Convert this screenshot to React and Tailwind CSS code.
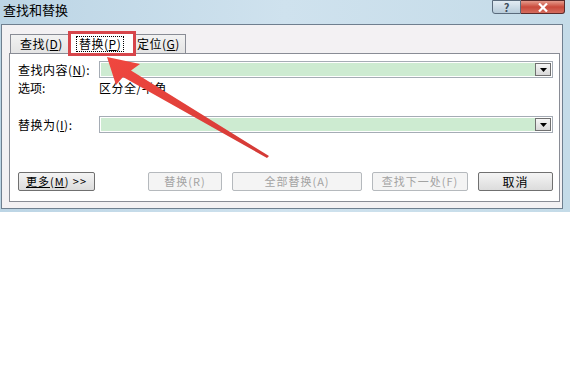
import React from 'react';

const font = { fontFamily: '"Noto Sans CJK SC", "Liberation Sans", sans-serif' };

function Combo() {
  return (
    <div className="flex-1 h-[17px] border border-[#a5acb5] bg-white p-[1px] flex">
      <div className="flex-1 bg-[#cdebd1]" />
      <div className="w-[16px] h-[13px] border border-[#707070] bg-gradient-to-b from-[#f6f6f6] to-[#d8d8d8] flex items-center justify-center">
        <svg width="7" height="4" viewBox="0 0 7 4"><path d="M0 0h7L3.5 4z" fill="#000" /></svg>
      </div>
    </div>
  );
}

function Btn({ children, disabled, className = '' }) {
  return (
    <div
      className={`h-[19px] rounded-[2px] border flex items-center justify-center text-[11px] leading-none tracking-[1px] ${
        disabled
          ? 'border-[#b5b9bd] bg-[#f4f4f4] text-[#a3a3a3]'
          : 'border-[#707070] bg-gradient-to-b from-[#f4f4f4] to-[#dcdcdc] text-black'
      } ${className}`}
    >
      {children}
    </div>
  );
}

export default function App() {
  return (
    <div className="w-[570px] h-[375px] bg-white relative overflow-hidden" style={font}>
      <div className="h-[212px] bg-gradient-to-r from-[#bcd5e5] via-[#cfe2ee] to-[#c4dbe8] flex flex-col">
        <div className="h-[24px] flex justify-between items-start">
          <span className="text-[13px] leading-none pl-[3px] pt-[3px] text-black">查找和替换</span>
          <div className="flex mr-[5px]">
            <div className="w-[29px] h-[14px] border border-[#5a6b7c] rounded-bl-[3px] bg-gradient-to-b from-[#e2ecf3] to-[#b7cbd9] flex items-center justify-center text-[11px] leading-none text-[#3c4c5c] font-bold">?</div>
            <div className="w-[44px] h-[14px] border border-l-0 border-[#5a2a2a] rounded-br-[3px] bg-gradient-to-b from-[#e49a8c] via-[#c9493b] to-[#d46c5e] flex items-center justify-center">
              <svg width="10" height="9" viewBox="0 0 10 9"><path d="M1 0.5l8 8M9 0.5l-8 8" stroke="#fff" strokeWidth="2.2" /></svg>
            </div>
          </div>
        </div>
        <div className="ml-[1px] w-[562px] h-[185px] border border-[#6f7f8f] bg-[#f3f1f3] pl-[7px] pr-[2px] pt-[7px]">
          <div className="flex items-end h-[21px] pl-[1px]">
            <div className="w-[59px] h-[19px] border border-b-0 border-[#898c95] bg-gradient-to-b from-[#f2f2f2] to-[#e4e4e4] text-[12px] leading-none tracking-[0.5px] flex items-center pl-[9px]">查找(<u>D</u>)</div>
            <div className="relative w-[65px] h-[22px] border border-b-0 border-[#898c95] bg-white text-[12px] leading-none tracking-[0.5px] flex items-center pl-[6px] -mb-[1px] z-10">
              <span className="border border-dotted border-black px-[2px] py-[1px]">替换(<u>P</u>)</span>
              <div className="absolute -left-[2px] -top-[2px] w-[68px] h-[25px] border-[3px] border-[#d7464b]" />
            </div>
            <div className="w-[52px] h-[19px] border border-l-0 border-b-0 border-[#898c95] bg-gradient-to-b from-[#f2f2f2] to-[#e4e4e4] text-[12px] leading-none tracking-[0.5px] flex items-center pl-[3px]">定位(<u>G</u>)</div>
          </div>
          <div className="w-[551px] h-[149px] border border-[#898c95] bg-white pl-[8px] pr-[6px] pt-[7px] flex flex-col text-[12px] leading-none text-black">
            <div className="flex items-center">
              <span className="w-[81px] tracking-[0.5px]">查找内容(<u>N</u>):</span>
              <Combo />
            </div>
            <div className="flex items-center mt-[3px] h-[14px]">
              <span className="w-[81px]">选项:</span>
              <span className="tracking-[0.5px]">区分全/半角</span>
            </div>
            <div className="flex items-center mt-[21px]">
              <span className="w-[81px] tracking-[0.5px]">替换为(<u>I</u>):</span>
              <Combo />
            </div>
            <div className="flex items-center mt-[39px]">
              <Btn className="w-[77px]"><span><u>更多</u>(<u>M</u>) &gt;&gt;</span></Btn>
              <Btn disabled className="w-[74px] ml-[53px]">替换(R)</Btn>
              <Btn disabled className="w-[130px] ml-[10px]">全部替换(A)</Btn>
              <Btn disabled className="w-[96px] ml-[10px]">查找下一处(F)</Btn>
              <Btn className="w-[75px] ml-[10px] text-[12px]">取消</Btn>
            </div>
          </div>
        </div>
      </div>
      <svg className="absolute left-0 top-0 pointer-events-none" width="570" height="375" viewBox="0 0 570 375">
        <defs>
          <linearGradient id="ar" x1="0" y1="0" x2="1" y2="1">
            <stop offset="0" stopColor="#f0473f" />
            <stop offset="1" stopColor="#d33a36" />
          </linearGradient>
        </defs>
        <path d="M107 57 L140 64 L131 70.5 L269 156 L267 158 L123 77 L116 85 Z" fill="url(#ar)" />
      </svg>
    </div>
  );
}
